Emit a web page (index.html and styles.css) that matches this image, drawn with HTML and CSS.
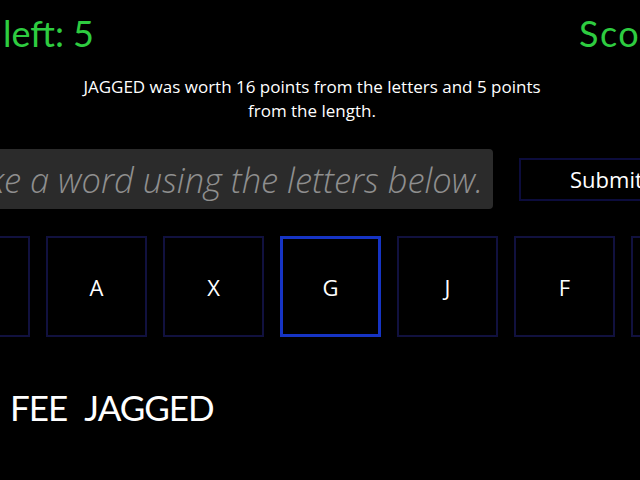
FILE: index.html
```
<!DOCTYPE html>
<html lang="en">
<head>
    <meta charset="UTF-8">
    <meta name="viewport" content="width=device-width, initial-scale=1.0">
    <title>Word game</title>
    <link rel="stylesheet" href="styles.css">
</head>
<body>
    <div class="topBar">
        <div class="movesBox"><span>Moves left: 5</span></div>
        <div class="scoreBox">Score: 21</div>
    </div>

    <div class="messageRow">
        <p class="message">JAGGED was worth 16 points from the letters and 5 points from the length.</p>
    </div>

    <form class="guessForm" name="guessForm">
        <input type="text" name="word" class="wordInput" placeholder="Make a word using the letters below.">
        <button type="button" class="submitButton">Submit</button>
    </form>

    <div class="tileRow">
        <div class="tile">E</div>
        <div class="tile">A</div>
        <div class="tile">X</div>
        <div class="tile tileActive">G</div>
        <div class="tile">J</div>
        <div class="tile">F</div>
        <div class="tile">D</div>
    </div>

    <div class="wordList">
        <span>FEE</span>
        <span>JAGGED</span>
    </div>
</body>
</html>
```

FILE: styles.css
```
html, body{
    margin: 0;
    background: #000;
    overflow: hidden;
}
body{
    width: 640px;
    height: 480px;
    color: #fff;
    font-family: "Open Sans", sans-serif;
}
.topBar{
    display: flex;
    align-items: center;
    height: 66px;
    white-space: nowrap;
    color: #2ecc40;
    font-family: Lato, sans-serif;
    font-size: 36px;
}
.movesBox{
    flex: 0 0 94px;
    min-width: 0;
    display: flex;
    justify-content: flex-end;
}
.scoreBox{
    margin-left: 485px;
    letter-spacing: 1.5px;
}
.messageRow{
    display: flex;
    justify-content: center;
    padding-right: 16px;
}
.message{
    width: 480px;
    margin: 9px 0 0 0;
    text-align: center;
    font-size: 17px;
    line-height: 24px;
}
.guessForm{
    display: flex;
    align-items: center;
    gap: 26px;
    margin: 26px 0 0 -107px;
}
.wordInput{
    flex: 0 0 600px;
    box-sizing: border-box;
    height: 60px;
    padding: 0 10px 0 0;
    border: none;
    border-radius: 4px;
    background: #2b2b2b;
    text-align: right;
    font-family: "Open Sans", sans-serif;
    font-size: 34.5px;
    font-weight: 300;
    font-style: italic;
    color: #fff;
}
.wordInput::placeholder{
    color: #8f8f8f;
}
.submitButton{
    flex: 0 0 170px;
    box-sizing: border-box;
    height: 43px;
    padding: 0 0 0 49px;
    border: 2px solid #0c0c3c;
    background: #000;
    text-align: left;
    color: #fff;
    font-family: "Open Sans", sans-serif;
    font-size: 22px;
}
.tileRow{
    display: flex;
    gap: 16px;
    margin: 27px 0 0 -71px;
}
.tile{
    flex: 0 0 101px;
    box-sizing: border-box;
    height: 101px;
    display: flex;
    align-items: center;
    justify-content: center;
    border: 2px solid #11113f;
    font-size: 22px;
}
.tileActive{
    border: 3px solid #1634c4;
}
.wordList{
    display: flex;
    gap: 17px;
    margin: 49px 0 0 10px;
    font-family: Lato, sans-serif;
    font-size: 35px;
    letter-spacing: -1px;
}
```
